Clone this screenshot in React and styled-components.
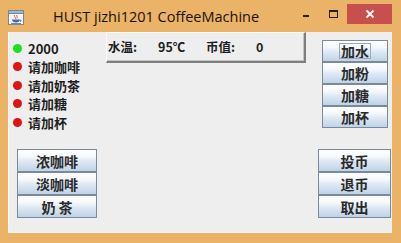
import React from "react";
import styled, { createGlobalStyle } from "styled-components";

const GlobalStyle = createGlobalStyle`
  html, body {
    margin: 0;
    padding: 0;
    background: #eab368;
  }
`;

const Frame = styled.div`
  width: 401px;
  height: 243px;
  background: #eab368;
  display: flex;
  flex-direction: column;
  overflow: hidden;
`;

const TitleBar = styled.div`
  height: 32px;
  display: flex;
  align-items: flex-start;
  flex-shrink: 0;
`;

const AppIcon = styled.div`
  width: 16px;
  height: 15px;
  margin: 10px 0 0 8px;
`;

const Title = styled.div`
  margin: 7px 0 0 29px;
  font-family: "Open Sans", "Noto Sans", sans-serif;
  font-size: 14.5px;
  color: #1a1208;
  white-space: nowrap;
`;

const Controls = styled.div`
  margin-left: auto;
  margin-right: 9px;
  display: flex;
  align-items: flex-start;
`;

const CtrlBtn = styled.div`
  width: ${(p) => p.$w}px;
  height: 20px;
  margin-top: 4px;
  display: flex;
  align-items: center;
  justify-content: center;
  background: ${(p) => (p.$close ? "#c7504f" : "transparent")};
`;

const Content = styled.div`
  margin: 0 9px 0 8px;
  height: 201px;
  background: #eeeeee;
  border-left: 1px solid #f7f7f7;
  border-bottom: 1px solid #f7f7f7;
  box-sizing: border-box;
  display: flex;
  flex-direction: column;
`;

const TopRow = styled.div`
  height: 117px;
  display: flex;
  align-items: flex-start;
`;

const StatusList = styled.div`
  width: 93px;
  margin: 7px 0 0 4px;
  display: flex;
  flex-direction: column;
`;

const StatusRow = styled.div`
  height: 18.5px;
  display: flex;
  align-items: center;
  gap: 6px;
  font-family: "Noto Sans CJK SC", "Liberation Sans", sans-serif;
  font-weight: 700;
  font-size: 13px;
  color: #1e1e1e;
`;

const Lamp = styled.span`
  width: 9px;
  height: 9px;
  border-radius: 50%;
  background: ${(p) => (p.$on ? "#1fe01f" : "#dc1414")};
  flex-shrink: 0;
`;

const InfoPanel = styled.div`
  width: 200px;
  height: 31px;
  box-sizing: border-box;
  border-top: 1px solid #fafafa;
  border-left: 1px solid #fafafa;
  border-right: 2px solid #7e7e7e;
  border-bottom: 2px solid #7e7e7e;
  box-shadow: inset -1px -1px 0 #c4c4c4;
  display: flex;
  align-items: center;
  padding: 0 0 1px 1px;
  font-family: "Noto Sans CJK SC", "Liberation Sans", sans-serif;
  font-weight: 700;
  font-size: 12.5px;
  color: #1e1e1e;
`;

const Field = styled.span`
  width: ${(p) => p.$w}px;
  flex-shrink: 0;
  white-space: nowrap;
`;

const ButtonCol = styled.div`
  display: flex;
  flex-direction: column;
  margin: ${(p) => p.$m || "0"};
`;

const Btn = styled.div`
  width: ${(p) => p.$w}px;
  height: ${(p) => p.$h}px;
  box-sizing: border-box;
  border: 1px solid #7a8a99;
  background: linear-gradient(
    to bottom,
    #ffffff 0%,
    #f6f9fc 30%,
    #dde8f3 55%,
    #bfd3e7 100%
  );
  display: flex;
  align-items: center;
  justify-content: center;
  font-family: "Noto Sans CJK SC", "Liberation Sans", sans-serif;
  font-weight: 700;
  font-size: 14px;
  color: #2a2a2a;
  white-space: pre;
`;

const Focus = styled.span`
  outline: 1px solid #99a8bb;
  padding: 0 1px;
  line-height: 14px;
`;

const BottomRow = styled.div`
  display: flex;
  justify-content: space-between;
  padding: 0 1px 0 8px;
`;

const JavaIcon = () => (
  <AppIcon>
    <svg width="16" height="15" viewBox="0 0 16 15">
      <rect x="0.5" y="0.5" width="15" height="14" fill="#f4f7fb" stroke="#7d8794" />
      <rect x="0.5" y="0.5" width="15" height="3" fill="#9fb5d4" stroke="#7d8794" />
      <path d="M7 5 C5 6.5 9 7.5 7 9" stroke="#e05a2a" strokeWidth="1" fill="none" />
      <path d="M9 5 C8 6.5 10 7 9 8.5" stroke="#e05a2a" strokeWidth="1" fill="none" />
      <path d="M4 9.5 h8 c0 2 -2 3 -4 3 c-2 0 -4 -1 -4 -3z" fill="#3f6cb0" />
      <path d="M12 10 c1.5 0 1.5 1.5 0 1.5" stroke="#3f6cb0" fill="none" />
      <rect x="3" y="13" width="10" height="0.8" fill="#3f6cb0" />
    </svg>
  </AppIcon>
);

const statuses = [
  { label: "2000", on: true },
  { label: "请加咖啡" },
  { label: "请加奶茶" },
  { label: "请加糖" },
  { label: "请加杯" },
];

export default function App() {
  return (
    <Frame>
      <GlobalStyle />
      <TitleBar>
        <JavaIcon />
        <Title>HUST jizhi1201 CoffeeMachine</Title>
        <Controls>
          <CtrlBtn $w={26}>
            <svg width="10" height="10" viewBox="0 0 10 10">
              <rect x="0" y="6" width="6" height="2" fill="#222" />
            </svg>
          </CtrlBtn>
          <CtrlBtn $w={26}>
            <svg width="10" height="10" viewBox="0 0 10 10">
              <rect x="0.5" y="1.5" width="8" height="7" fill="none" stroke="#222" />
              <rect x="0.5" y="1.5" width="8" height="1.5" fill="#222" />
            </svg>
          </CtrlBtn>
          <CtrlBtn $w={45} $close>
            <svg width="10" height="10" viewBox="0 0 10 10">
              <path d="M1.5 1.5 L8.5 8.5 M8.5 1.5 L1.5 8.5" stroke="#fff" strokeWidth="1.8" />
            </svg>
          </CtrlBtn>
        </Controls>
      </TitleBar>
      <Content>
        <TopRow>
          <StatusList>
            {statuses.map((s) => (
              <StatusRow key={s.label}>
                <Lamp $on={s.on} />
                {s.label}
              </StatusRow>
            ))}
          </StatusList>
          <InfoPanel>
            <Field $w={50}>水温:</Field>
            <Field $w={48}>95℃</Field>
            <Field $w={50}>币值:</Field>
            <Field $w={20}>0</Field>
          </InfoPanel>
          <ButtonCol $m="8px 0 0 16px">
            <Btn $w={66} $h={22}>
              <Focus>加水</Focus>
            </Btn>
            <Btn $w={66} $h={22}>加粉</Btn>
            <Btn $w={66} $h={22}>加糖</Btn>
            <Btn $w={66} $h={22}>加杯</Btn>
          </ButtonCol>
        </TopRow>
        <BottomRow>
          <ButtonCol>
            <Btn $w={80} $h={23}>浓咖啡</Btn>
            <Btn $w={80} $h={23}>淡咖啡</Btn>
            <Btn $w={80} $h={23}>奶 茶</Btn>
          </ButtonCol>
          <ButtonCol>
            <Btn $w={73} $h={23}>投币</Btn>
            <Btn $w={73} $h={23}>退币</Btn>
            <Btn $w={73} $h={23}>取出</Btn>
          </ButtonCol>
        </BottomRow>
      </Content>
    </Frame>
  );
}
